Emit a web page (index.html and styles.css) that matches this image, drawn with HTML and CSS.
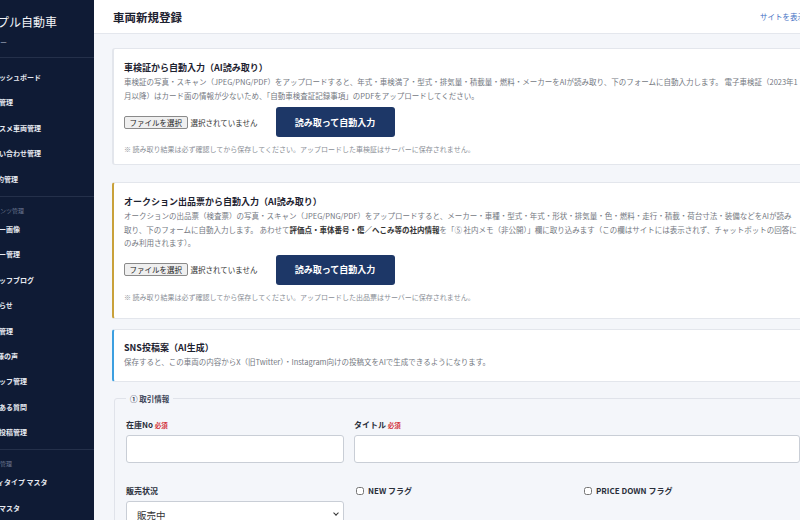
FILE: index.html
```html
<!DOCTYPE html>
<html lang="ja">
<head>
  <meta charset="UTF-8">
  <title>車両新規登録</title>
  <link rel="stylesheet" href="styles.css">
</head>
<body>

<div class="app">
  <aside class="sidebar">
    <div class="brand">
      <div class="brand-name">プル自動車</div>
      <div class="brand-sub">ー</div>
    </div>

    <nav class="nav-group first">
      <a class="nav-item">ッシュボード</a>
      <a class="nav-item">管理</a>
      <a class="nav-item">スメ車両管理</a>
      <a class="nav-item">い合わせ管理</a>
      <a class="nav-item cut">約管理</a>
    </nav>

    <nav class="nav-group">
      <div class="nav-label">ンツ管理</div>
      <a class="nav-item">ー画像</a>
      <a class="nav-item">ー管理</a>
      <a class="nav-item">ッフブログ</a>
      <a class="nav-item">らせ</a>
      <a class="nav-item">管理</a>
      <a class="nav-item cut">様の声</a>
      <a class="nav-item">ッフ管理</a>
      <a class="nav-item">ある質問</a>
      <a class="nav-item">投稿管理</a>
    </nav>

    <nav class="nav-group last">
      <div class="nav-label">管理</div>
      <a class="nav-item cut">ィタイプ マスタ</a>
      <a class="nav-item">マスタ</a>
    </nav>
  </aside>

  <main class="main">
    <header class="topbar">
      <h1>車両新規登録</h1>
      <a class="site-link">サイトを表示</a>
    </header>

    <div class="content">

      <section class="card card-shaken">
        <h3>車検証から自動入力（AI読み取り）</h3>
        <p class="desc">車検証の写真・スキャン（JPEG/PNG/PDF）をアップロードすると、年式・車検満了・型式・排気量・積載量・燃料・メーカーをAIが読み取り、下のフォームに自動入力します。 電子車検証（2023年1月以降）はカード面の情報が少ないため、「自動車検査証記録事項」のPDFをアップロードしてください。</p>
        <div class="upload-row">
          <label class="file-btn">ファイルを選択<input type="file" accept="image/*,.pdf"></label>
          <span class="file-name">選択されていません</span>
          <button class="read-btn">読み取って自動入力</button>
        </div>
        <p class="note">※ 読み取り結果は必ず確認してから保存してください。アップロードした車検証はサーバーに保存されません。</p>
      </section>

      <section class="card card-auction">
        <h3>オークション出品票から自動入力（AI読み取り）</h3>
        <p class="desc">オークションの出品票（検査票）の写真・スキャン（JPEG/PNG/PDF）をアップロードすると、メーカー・車種・型式・年式・形状・排気量・色・燃料・走行・積載・荷台寸法・装備などをAIが読み取り、下のフォームに自動入力します。 あわせて<strong>評価点・車体番号・傷／へこみ等の社内情報</strong>を「⑤ 社内メモ（非公開）」欄に取り込みます（この欄はサイトには表示されず、チャットボットの回答にのみ利用されます）。</p>
        <div class="upload-row">
          <label class="file-btn">ファイルを選択<input type="file" accept="image/*,.pdf"></label>
          <span class="file-name">選択されていません</span>
          <button class="read-btn">読み取って自動入力</button>
        </div>
        <p class="note">※ 読み取り結果は必ず確認してから保存してください。アップロードした出品票はサーバーに保存されません。</p>
      </section>

      <section class="card card-sns">
        <h3>SNS投稿案（AI生成）</h3>
        <p class="desc">保存すると、この車両の内容からX（旧Twitter）・Instagram向けの投稿文をAIで生成できるようになります。</p>
      </section>

      <fieldset class="form-section">
        <legend>① 取引情報</legend>
        <div class="form-grid">
          <div class="field">
            <label for="stock-no">在庫No <span class="req">必須</span></label>
            <input type="text" id="stock-no">
          </div>
          <div class="field span-2">
            <label for="title">タイトル <span class="req">必須</span></label>
            <input type="text" id="title">
          </div>
          <div class="field">
            <label for="status">販売状況</label>
            <div class="select-wrap">
              <select id="status">
                <option>販売中</option>
                <option>商談中</option>
                <option>売約済</option>
              </select>
            </div>
          </div>
          <div class="field">
            <label class="check"><input type="checkbox"> NEW フラグ</label>
          </div>
          <div class="field">
            <label class="check"><input type="checkbox"> PRICE DOWN フラグ</label>
          </div>
        </div>
      </fieldset>

    </div>
  </main>
</div>

</body>
</html>
```

FILE: styles.css
```css
* {
  box-sizing: border-box;
}

body {
  margin: 0;
  font-family: "Noto Sans CJK JP", "Noto Sans", sans-serif;
  color: #222;
  background: #f4f6fa;
  overflow: hidden;
}

.app {
  display: flex;
  height: 520px;
}

/* sidebar */

.sidebar {
  flex: none;
  width: 94px;
  background: #0f1b35;
  color: #e3e7ef;
  overflow: hidden;
  white-space: nowrap;
}

.brand {
  padding: 14px 0 9px;
  border-bottom: 1px solid #24304a;
}

.brand-name {
  font-size: 12px;
  line-height: 16px;
  color: #f2f4f8;
  text-indent: -3px;
}

.brand-sub {
  margin-top: 6px;
  font-size: 7px;
  line-height: 12px;
  color: #8a93a8;
}

.nav-group {
  display: flex;
  flex-direction: column;
  padding: 7px 0 4px;
  border-bottom: 1px solid #24304a;
}

.nav-group.last {
  border-bottom: none;
}

.nav-label {
  padding-top: 1px;
  font-size: 6px;
  line-height: 12px;
  color: #6d7891;
}

.nav-item {
  height: 25.4px;
  line-height: 25.4px;
  font-size: 7px;
  font-weight: 700;
  color: #e6e9f0;
  text-indent: -1px;
}

.nav-item.cut {
  text-indent: -3px;
}

/* main */

.main {
  flex: none;
  width: 734px;
}

.topbar {
  display: flex;
  align-items: center;
  height: 34px;
  padding: 0 23px 0 19px;
  background: #fff;
  border-bottom: 1px solid #e4e7ed;
}

.topbar h1 {
  margin: 0;
  font-size: 11.5px;
  font-weight: 700;
  color: #1d2230;
}

.site-link {
  margin-left: auto;
  font-size: 7.5px;
  color: #3f6fc4;
}

.content {
  padding: 14px 18px;
}

.card {
  background: #fff;
  border: 1px solid #e3e6ec;
  border-radius: 3px;
  padding: 12px 8px 9px 10px;
}

.card-shaken {
  border-left-width: 2px;
  margin-bottom: 17px;
}

.card-auction {
  border-left: 2px solid #c9a13a;
  padding-right: 12px;
  padding-bottom: 15px;
  margin-bottom: 10px;
}

.card-sns {
  border-left: 2px solid #3c9fe0;
  padding-top: 11px;
  padding-bottom: 12px;
}

.card h3 {
  margin: 0;
  font-size: 9px;
  line-height: 14px;
  font-weight: 700;
  color: #1d2230;
}

.desc {
  margin: 0;
  font-size: 7.5px;
  line-height: 13.6px;
  color: #74787f;
}

.desc strong {
  color: #333;
}

.upload-row {
  display: flex;
  align-items: center;
  margin-top: 5px;
}

.file-btn {
  display: inline-block;
  height: 13px;
  line-height: 11px;
  padding: 0 4.5px;
  font-size: 7.5px;
  color: #222;
  background: #efefef;
  border: 1px solid #8a8a8a;
  border-radius: 2px;
}

.file-btn input {
  display: none;
}

.file-name {
  margin-left: 3px;
  font-size: 7.5px;
  color: #333;
}

.read-btn {
  margin-left: 18px;
  width: 119px;
  height: 30px;
  border: none;
  border-radius: 3px;
  background: #1d3767;
  color: #fff;
  font-family: inherit;
  font-size: 9px;
  font-weight: 700;
}

.note {
  margin: 6px 0 0;
  font-size: 7px;
  line-height: 12px;
  color: #8b8f97;
}

/* form */

.form-section {
  margin: 11px -2px 0 2px;
  padding: 0 11px 20px;
  border: 1px solid #e0e3ea;
  border-radius: 3px;
}

.form-section legend {
  padding: 0 4px;
  margin-left: 0;
  font-size: 7.5px;
  line-height: 12px;
  font-weight: 700;
  color: #3c4457;
}

.form-grid {
  display: grid;
  grid-template-columns: repeat(3, 1fr);
  column-gap: 10px;
  row-gap: 22px;
  padding-top: 14px;
}

.span-2 {
  grid-column: span 2;
}

.field label {
  display: block;
  margin-bottom: 4px;
  font-size: 8px;
  line-height: 12px;
  font-weight: 700;
  color: #2a2f3a;
}

.req {
  font-size: 6.5px;
  color: #d3343a;
}

.field input[type="text"],
.field select {
  display: block;
  width: 100%;
  height: 28px;
  border: 1px solid #c9ced6;
  border-radius: 3px;
  background: #fff;
  font-family: inherit;
}

.select-wrap {
  position: relative;
}

.field select {
  appearance: none;
  padding: 0 10px;
  font-size: 9.5px;
  color: #333;
}

.select-wrap::after {
  content: "";
  position: absolute;
  right: 6px;
  top: 10px;
  width: 3px;
  height: 3px;
  border-right: 1.5px solid #333;
  border-bottom: 1.5px solid #333;
  transform: rotate(45deg);
}

.field .check {
  display: flex;
  align-items: center;
  font-weight: 700;
}

.check input {
  width: 8px;
  height: 8px;
  margin: 0 4px 0 2px;
}
```
